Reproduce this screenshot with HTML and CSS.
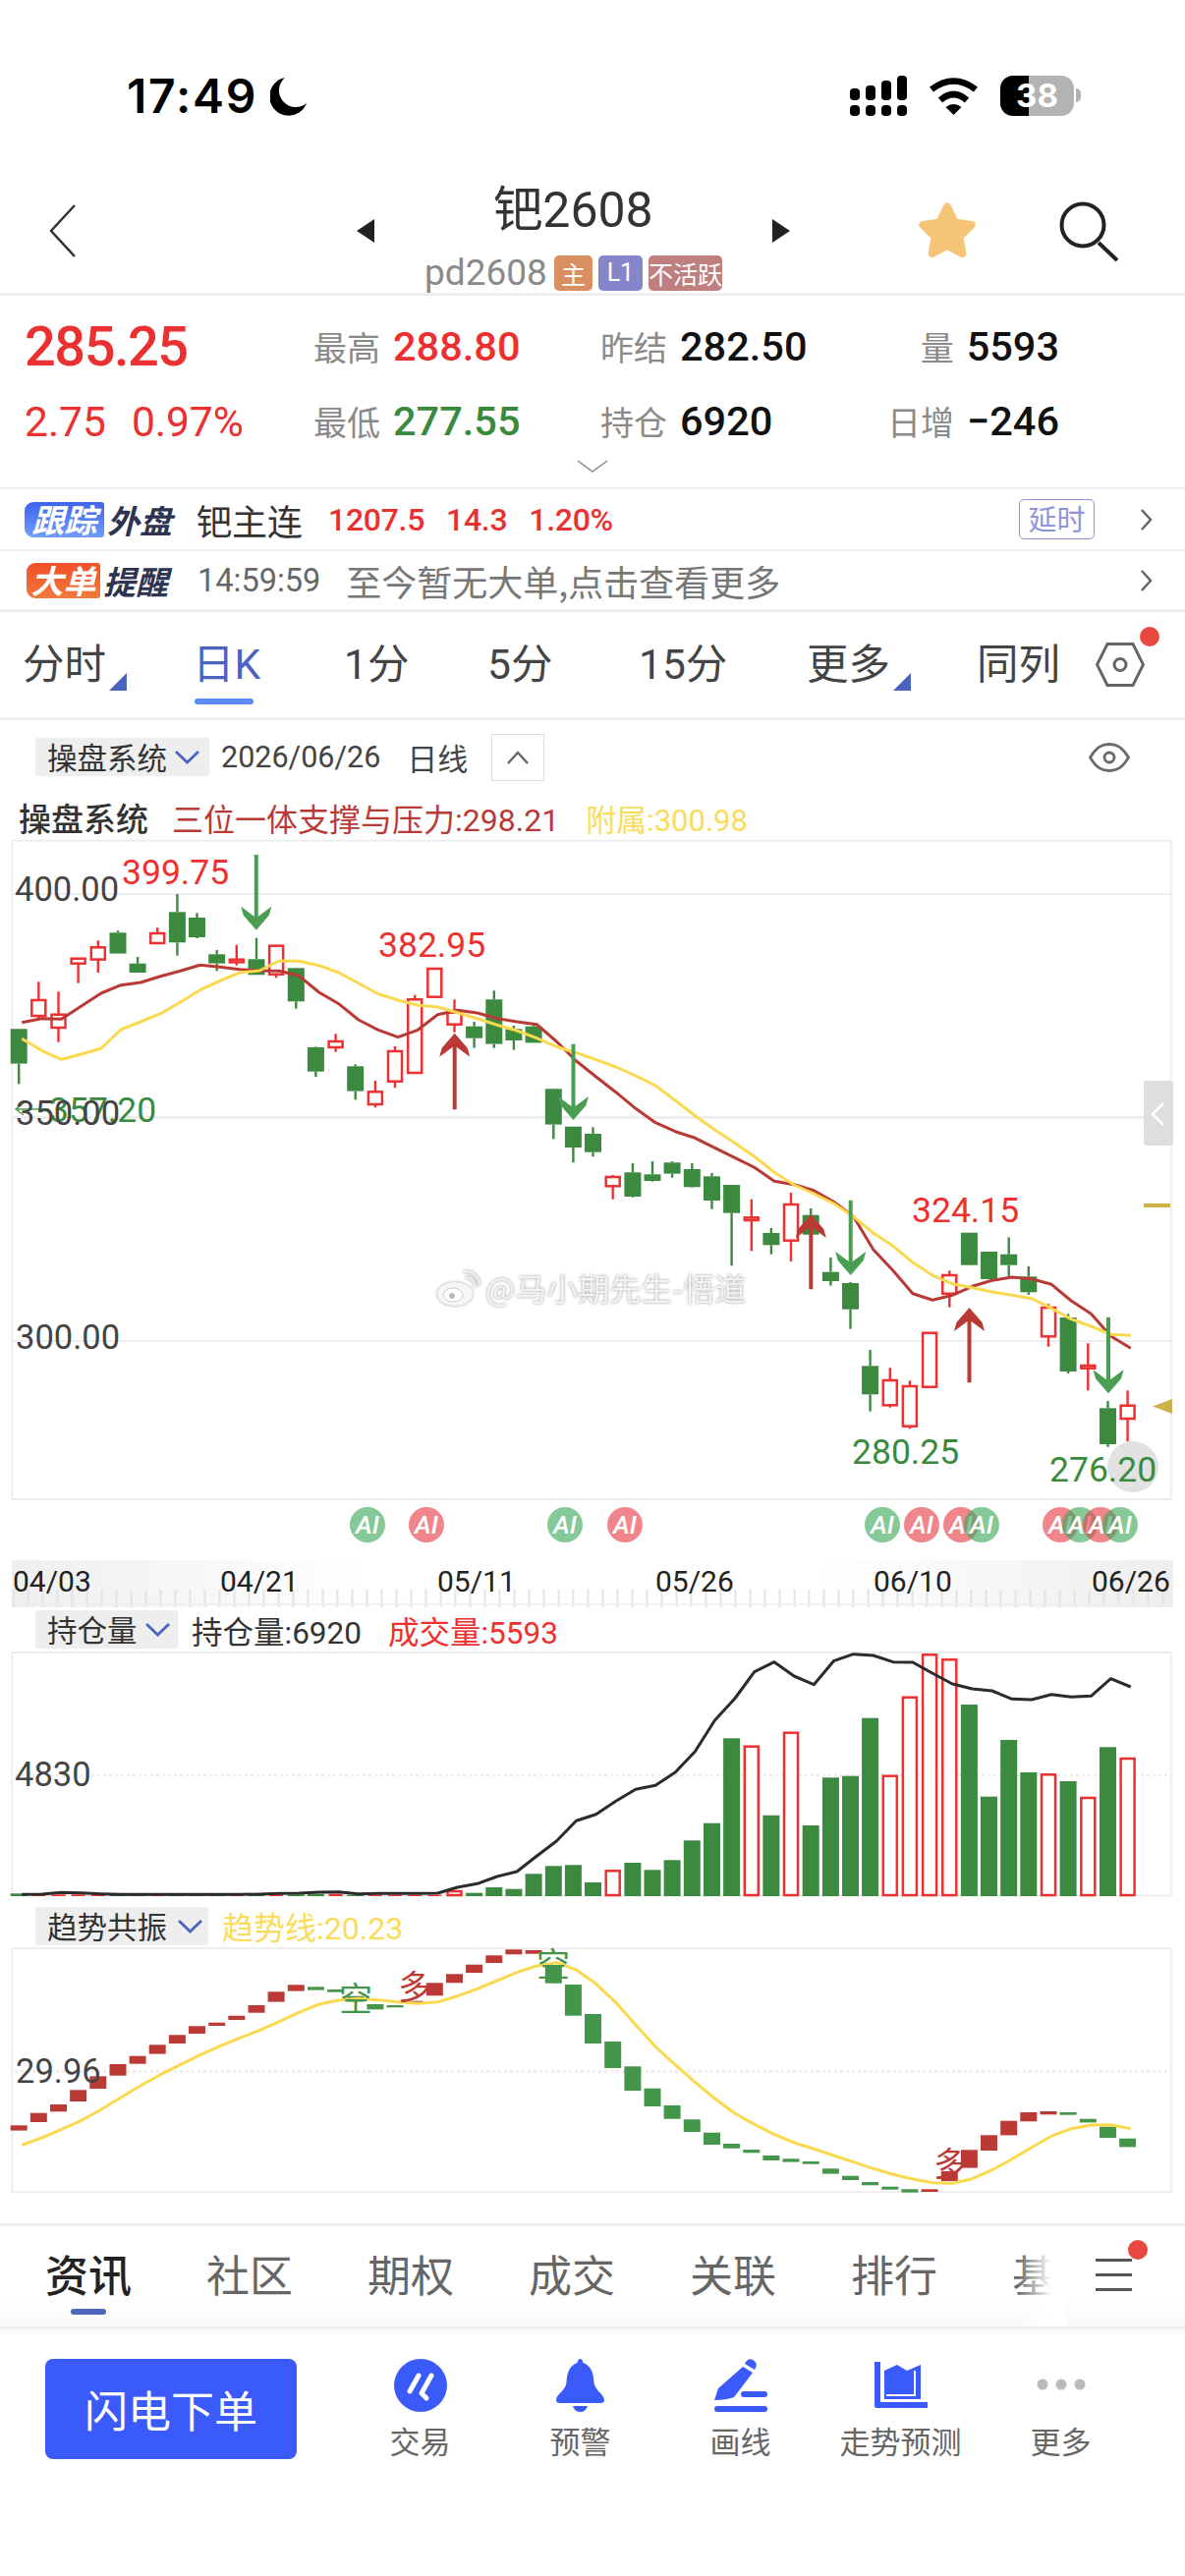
FILE: index.html
```html
<!DOCTYPE html>
<html lang="zh-CN">
<head>
<meta charset="utf-8">
<title>钯2608</title>
<link rel="stylesheet" href="styles.css">
</head>
<body>
<header class="status">
  <span class="time">17:49</span>
  <svg class="moon" width="38" height="40" viewBox="0 0 38 40"><path d="M15 1A19.5 19.5 0 1 0 37 27A17 17 0 0 1 15 1Z"/></svg>
  <div class="status-right">
    <svg class="signal" width="58" height="41" viewBox="0 0 58 41"><rect x="0" y="13" width="10" height="12" rx="4"/><rect x="16" y="10" width="10" height="15" rx="4"/><rect x="32" y="5" width="10" height="20" rx="4"/><rect x="48" y="0" width="10" height="25" rx="4"/><rect x="0" y="30" width="10" height="11" rx="4"/><rect x="16" y="30" width="10" height="11" rx="4"/><rect x="32" y="30" width="10" height="11" rx="4"/><rect x="48" y="30" width="10" height="11" rx="4"/></svg>
    <svg class="wifi" width="51" height="39" viewBox="0 0 51 39"><path class="wifi-arc" d="M3 13Q25.500 -4 48 13"/><path class="wifi-arc" d="M12 24Q25.500 12 39 24"/><path d="M17.500 31Q25.500 25 33.500 31L25.500 39Z"/></svg>
    <div class="battery"><span>38</span></div>
  </div>
</header>

<nav class="nav">
  <div class="nav-back"><svg width="28" height="54" viewBox="0 0 28 54"><path class="ln-dark" d="M26 1L2 27L26 53"/></svg></div>
  <div class="nav-center">
    <i class="tri tri-left"></i>
    <div class="nav-title">
      <h1 class="title">钯2608</h1>
      <div class="sub">
        <span class="code">pd2608</span>
        <span class="tag tag-orange">主</span>
        <span class="tag tag-purple">L1</span>
        <span class="tag tag-rose">不活跃</span>
      </div>
    </div>
    <i class="tri tri-right"></i>
  </div>
  <div class="nav-actions">
    <svg class="star" width="60" height="60" viewBox="0 0 60 60"><path d="M30 5.500L37.600 21.500L54.700 24L42.400 36L45.300 53L30 45L14.700 53L17.600 36L5.300 24L22.400 21.500Z"/></svg>
    <svg class="search" width="62" height="62" viewBox="0 0 62 62"><circle cx="24" cy="24" r="21.500"/><path d="M40 42L59 60"/></svg>
  </div>
</nav>

<section class="quote">
  <div class="quote-grid">
    <div class="cell price red">285.25</div>
    <div class="cell"><span class="lbl">最高</span><b class="val red">288.80</b></div>
    <div class="cell"><span class="lbl">昨结</span><b class="val">282.50</b></div>
    <div class="cell cell-end"><span class="lbl">量</span><b class="val">5593</b></div>
    <div class="cell change red"><span>2.75</span><span>0.97%</span></div>
    <div class="cell"><span class="lbl">最低</span><b class="val green">277.55</b></div>
    <div class="cell"><span class="lbl">持仓</span><b class="val">6920</b></div>
    <div class="cell cell-end"><span class="lbl">日增</span><b class="val">−246</b></div>
  </div>
  <div class="more"><svg width="32" height="13" viewBox="0 0 32 13"><path class="ln-gray" d="M1 1L16 12L31 1"/></svg></div>
</section>

<div class="info info-a">
  <span class="chip chip-blue">跟踪</span><span class="chip-side">外盘</span>
  <span class="ext-name">钯主连</span>
  <span class="ext-nums red"><span>1207.5</span><span>14.3</span><span>1.20%</span></span>
  <span class="delay">延时</span>
  <svg class="go" width="13" height="22" viewBox="0 0 13 22"><path class="ln-mid" d="M2 1L11 11L2 21"/></svg>
</div>
<div class="info info-b">
  <span class="chip chip-orange">大单</span><span class="chip-side">提醒</span>
  <span class="big-time">14:59:59</span>
  <span class="big-text">至今暂无大单,点击查看更多</span>
  <svg class="go" width="13" height="22" viewBox="0 0 13 22"><path class="ln-mid" d="M2 1L11 11L2 21"/></svg>
</div>

<div class="tabs">
  <span class="tab">分时<i class="corner"></i></span>
  <span class="tab tab-on">日K</span>
  <span class="tab">1分</span>
  <span class="tab">5分</span>
  <span class="tab">15分</span>
  <span class="tab">更多<i class="corner"></i></span>
  <span class="tab">同列</span>
  <span class="hex-wrap">
    <svg width="50" height="45" viewBox="0 0 50 45"><path class="ln-hex" d="M12 1.500H38L48.500 22.500L38 43.500H12L1.500 22.500Z"/><circle class="ln-hex" cx="25" cy="22.500" r="6"/></svg>
    <i class="dot dot-hex"></i>
  </span>
</div>

<div class="toolbar">
  <span class="drop drop-a">操盘系统<svg width="27" height="15" viewBox="0 0 27 15"><path class="ln-blue" d="M2 2L13.500 13L25 2"/></svg></span>
  <span class="date">2026/06/26</span>
  <span class="period">日线</span>
  <span class="up-btn"><svg width="24" height="14" viewBox="0 0 24 14"><path class="ln-mid" d="M2 13L12 2L22 13"/></svg></span>
  <svg class="eye" width="42" height="30" viewBox="0 0 42 30"><path class="ln-eye" d="M1.500 15C8 4 14 1.500 21 1.500S34 4 40.500 15C34 26 28 28.500 21 28.500S8 26 1.500 15Z"/><circle class="ln-eye" cx="21" cy="15" r="5"/></svg>
</div>

<div class="legend">
  <span class="legend-name">操盘系统</span>
  <span class="legend-a">三位一体支撑与压力:298.21</span>
  <span class="legend-b">附属:300.98</span>
</div>

<svg class="chart chart-main" width="1206" height="786" viewBox="0 850 1206 786">
  <defs>
    <linearGradient id="axL"><stop offset="0" stop-color="#efefef"/><stop offset="1" stop-color="#ffffff"/></linearGradient>
    <linearGradient id="axR"><stop offset="0" stop-color="#ffffff"/><stop offset="1" stop-color="#eeeeee"/></linearGradient>
  </defs>
  <rect class="frame" x="12.300" y="855.700" width="1179.500" height="670.300"/>
  <path class="grid" d="M12 910H1194M12 1365H1194"/>
  <path class="grid grid-thick" d="M12 1137.500H1194"/>
  <g class="watermark">
    <ellipse cx="463" cy="1317" rx="18" ry="12"/>
    <ellipse class="wm-in" cx="461" cy="1318" rx="10" ry="7"/>
    <circle class="wm-eye" cx="460" cy="1319" r="3"/>
    <path class="wm-wave" d="M474 1300Q482 1300 484 1310M472 1294Q486 1294 488 1308"/>
    <text x="494" y="1324">@马小期先生-悟道</text>
  </g>
  <g id="candles"></g>
  <g id="arrows"></g>
  <circle class="press" cx="1153" cy="1493" r="26"/>
  <text class="t t-gray" x="15" y="917">400.00</text>
  <text class="t t-red" x="124" y="899.500">399.75</text>
  <text class="t t-red" x="385" y="974">382.95</text>
  <path class="thin-green" d="M50 1129H16M24 1123L16 1129L24 1135"/>
  <text class="t t-green" x="50" y="1142">357.20</text>
  <text class="t t-gray" x="16" y="1145">350.00</text>
  <text class="t t-gray" x="16" y="1373">300.00</text>
  <text class="t t-red" x="928" y="1244">324.15</text>
  <text class="t t-green" x="867" y="1490">280.25</text>
  <text class="t t-green" x="1068" y="1508">276.20</text>
  <rect class="handle" x="1164" y="1100" width="30" height="66" rx="3"/>
  <path class="handle-c" d="M1184 1123L1173 1134L1184 1145"/>
  <rect class="gold" x="1164" y="1225" width="27" height="4"/>
  <path class="gold" d="M1173 1431.500L1193 1424V1439Z"/>
  <g class="ai ai-g"><circle cx="374" cy="1552" r="18"/><text x="374" y="1561">AI</text></g>
  <g class="ai ai-r"><circle cx="434" cy="1552" r="18"/><text x="434" y="1561">AI</text></g>
  <g class="ai ai-g"><circle cx="575" cy="1552" r="18"/><text x="575" y="1561">AI</text></g>
  <g class="ai ai-r"><circle cx="636" cy="1552" r="18"/><text x="636" y="1561">AI</text></g>
  <g class="ai ai-g"><circle cx="898" cy="1552" r="18"/><text x="898" y="1561">AI</text></g>
  <g class="ai ai-r"><circle cx="938" cy="1552" r="18"/><text x="938" y="1561">AI</text></g>
  <g class="ai ai-r"><circle cx="978" cy="1552" r="18"/><text x="978" y="1561">AI</text></g>
  <g class="ai ai-g"><circle cx="999" cy="1552" r="18"/><text x="999" y="1561">AI</text></g>
  <g class="ai ai-r"><circle cx="1079" cy="1552" r="18"/><text x="1079" y="1561">AI</text></g>
  <g class="ai ai-g"><circle cx="1099" cy="1552" r="18"/><text x="1099" y="1561">AI</text></g>
  <g class="ai ai-r"><circle cx="1120" cy="1552" r="18"/><text x="1120" y="1561">AI</text></g>
  <g class="ai ai-g"><circle cx="1140" cy="1552" r="18"/><text x="1140" y="1561">AI</text></g>
  <rect class="axis-l" x="12" y="1588" width="363" height="48"/>
  <rect class="axis-r" x="830" y="1588" width="364" height="48"/>
  <g id="ticks"></g>
  <path class="grid" d="M12 1632.700H1194"/>
  <text class="t-date" x="13" y="1620">04/03</text>
  <text class="t-date" x="224" y="1620">04/21</text>
  <text class="t-date" x="445" y="1620">05/11</text>
  <text class="t-date" x="667" y="1620">05/26</text>
  <text class="t-date" x="889" y="1620">06/10</text>
  <text class="t-date" x="1111" y="1620">06/26</text>
</svg>

<div class="pane-head">
  <span class="drop drop-b">持仓量<svg width="27" height="15" viewBox="0 0 27 15"><path class="ln-blue" d="M2 2L13.500 13L25 2"/></svg></span>
  <span class="pane-dark">持仓量:6920</span>
  <span class="pane-red">成交量:5593</span>
</div>
<svg class="chart chart-vol" width="1206" height="256" viewBox="0 1680 1206 256">
  <rect class="frame" x="12.300" y="1682" width="1179.500" height="247.500"/>
  <path class="dots" d="M15 1807H1192"/>
  <g id="volume"></g>
  <text class="t t-gray" x="15" y="1818">4830</text>
</svg>

<div class="pane-head pane-head-b">
  <span class="drop drop-c">趋势共振<svg width="27" height="15" viewBox="0 0 27 15"><path class="ln-blue" d="M2 2L13.500 13L25 2"/></svg></span>
  <span class="pane-yellow">趋势线:20.23</span>
</div>
<svg class="chart chart-trend" width="1206" height="259" viewBox="0 1981 1206 259">
  <rect class="frame" x="12.300" y="1983" width="1179.500" height="248"/>
  <path class="dots" d="M15 2108.500H1192"/>
  <g id="trend"></g>
  <text class="t t-gray" x="16" y="2120">29.96</text>
  <text class="sig sig-g" x="345" y="2047">空</text>
  <text class="sig sig-r" x="405" y="2035">多</text>
  <text class="sig sig-g" x="546" y="2012">空</text>
  <text class="sig sig-r" x="950" y="2215">多</text>
</svg>

<div class="subtabs">
  <div class="subtabs-scroll">
    <span class="subtab subtab-on">资讯</span>
    <span class="subtab">社区</span>
    <span class="subtab">期权</span>
    <span class="subtab">成交</span>
    <span class="subtab">关联</span>
    <span class="subtab">排行</span>
    <span class="subtab">基本</span>
  </div>
  <span class="burger"><i></i><i></i><i></i><i class="dot dot-burger"></i></span>
</div>

<footer class="bar">
  <button class="flash">闪电下单</button>
  <div class="bar-items">
    <div class="bar-item">
      <svg width="54" height="54" viewBox="0 0 54 54"><ellipse class="ic" cx="27" cy="27" rx="27" ry="27"/><path class="ic-w" d="M25 17L16 33M38 17L28 35L33 40"/></svg>
      <span>交易</span>
    </div>
    <div class="bar-item">
      <svg width="50" height="54" viewBox="0 0 50 54"><path class="ic" d="M24.500 0c-1.500 0-2.500 1.500-3 4C13 7 11 15 10.500 24C10 32 0 36 0 42q0 3 4 3H45q4 0 4-3C49 36 39 32 38.500 24C38 15 36 7 27.500 4C27 1.500 26 0 24.500 0Z"/><path class="ic" d="M17 48H32Q30 54 24.500 54Q19 54 17 48Z"/></svg>
      <span>预警</span>
    </div>
    <div class="bar-item">
      <svg width="54" height="54" viewBox="0 0 54 54"><path class="ic" d="M32 3Q35 -1 39 1L41 2.500Q44 5 42 9L41 11L31 5Z"/><path class="ic" d="M29 8L39 14L20 39Q12 42 0 42L4 30Z"/><rect class="ic" x="27" y="33" width="27" height="6" rx="3"/><rect class="ic" x="0" y="48" width="54" height="6" rx="3"/></svg>
      <span>画线</span>
    </div>
    <div class="bar-item">
      <svg width="54" height="54" viewBox="0 0 54 54"><path class="ic" d="M0 3H6V44H54V50H2Q0 50 0 48Z"/><path class="ic" d="M10 12L23 6L33 12L47 6V41H10Z"/><path class="ic-gap" d="M12 37H41V12"/></svg>
      <span>走势预测</span>
    </div>
    <div class="bar-item">
      <svg width="54" height="54" viewBox="0 0 54 54"><circle class="ic-dots" cx="8" cy="26" r="5.500"/><circle class="ic-dots" cx="27" cy="26" r="5.500"/><circle class="ic-dots" cx="46" cy="26" r="5.500"/></svg>
      <span>更多</span>
    </div>
  </div>
</footer>
<script src="chart.js"></script>
</body>
</html>
```

FILE: styles.css
```css
* { box-sizing: border-box; }
html, body { margin: 0; padding: 0; background: #fff; }
body {
  width: 1206px;
  height: 2622px;
  overflow: hidden;
  font-family: Roboto, "Noto Sans CJK SC", sans-serif;
  color: #333;
}
i { display: block; font-style: normal; }
.red { color: #ea3030; }
.green { color: #3a8a3e; }

/* status bar */
.status { display: flex; align-items: flex-start; height: 180px; padding: 77px 113px 0 129px; }
.time { font: 600 48px/50px Inter, sans-serif; color: #000; margin-top: -4px; letter-spacing: 1.800px; }
.moon { margin-left: 13px; margin-top: 1px; fill: #000; }
.status-right { margin-left: auto; display: flex; align-items: flex-start; gap: 22px; }
.signal { fill: #000; }
.wifi { fill: #000; margin-top: 1px; }
.wifi-arc { fill: none; stroke: #000; stroke-width: 6.500px; }
.battery {
  position: relative; width: 75px; height: 41px; border-radius: 13px;
  background: linear-gradient(90deg, #000 39%, #b3b3b3 39%);
  display: flex; align-items: center; justify-content: center;
  color: #fff; font: 700 33px/41px Inter, sans-serif;
}
.battery::after {
  content: ""; position: absolute; left: 77px; top: 13px; width: 5px; height: 14px;
  background: #b3b3b3; border-radius: 0 7px 7px 0;
}

/* navigation */
.nav { display: grid; grid-template-columns: 363px 441px 1fr; height: 121px; border-bottom: 3px solid #eee; }
.nav-back { padding: 28px 0 0 50px; }
.nav-center { display: flex; justify-content: space-between; align-items: flex-start; }
.tri { width: 0; height: 0; margin-top: 43px; border-top: 12px solid transparent; border-bottom: 12px solid transparent; }
.tri-left { border-right: 18px solid #222; }
.tri-right { border-left: 18px solid #222; }
.nav-title { display: flex; flex-direction: column; align-items: center; padding-top: 6px; }
.title { margin: 0; font: 400 50px/56px Roboto, "Noto Sans CJK SC", sans-serif; color: #333; }
.sub { display: flex; align-items: center; gap: 6px; margin-top: 18px; height: 36px; }
.code { font-size: 37px; line-height: 36px; color: #8a8a8a; margin-right: 1px; }
.tag { height: 36px; line-height: 36px; text-align: center; color: #fff; font-size: 25px; border-radius: 5px; font-family: "Noto Sans CJK SC", sans-serif; }
.tag-orange { width: 39px; background: #d98f5f; }
.tag-purple { width: 45px; background: #8585c9; font-family: Roboto, sans-serif; }
.tag-rose { width: 75px; background: #c07f7f; }
.nav-actions { display: flex; align-items: flex-start; padding: 25px 0 0 130px; gap: 84px; }
.star { fill: #f6c476; stroke: #f6c476; stroke-width: 8px; stroke-linejoin: round; }
.search { fill: none; stroke: #222; stroke-width: 4px; }
.ln-dark, .ln-gray, .ln-mid, .ln-blue, .ln-hex, .ln-eye { fill: none; }
.ln-dark { stroke: #333; stroke-width: 2.500px; }
.ln-gray { stroke: #8a8a8a; stroke-width: 1.500px; }
.ln-mid { stroke: #666; stroke-width: 2.500px; }
.ln-blue { stroke: #4a64c0; stroke-width: 2.800px; }
.ln-hex { stroke: #666; stroke-width: 3px; }
.ln-eye { stroke: #6a6a6a; stroke-width: 2.800px; }

/* quote */
.quote { height: 195px; padding-top: 14px; }
.quote-grid { display: grid; grid-template-columns: 293px 292px 269px 198px; grid-template-rows: 76px 76px; padding-left: 26px; }
.cell { display: flex; align-items: center; gap: 13px; }
.cell-end { justify-content: flex-end; }
.price { font-size: 56px; font-weight: 500; letter-spacing: -1.500px; margin-left: -1px; }
.change { font-size: 42.500px; gap: 26px; font-weight: 400; margin-left: -1px; }
.lbl { font: 400 34px/44px "Noto Sans CJK SC", sans-serif; color: #8a8a8a; }
.val { font-size: 41.500px; line-height: 44px; font-weight: 500; color: #111; }
.val.red { color: #ea3030; }
.val.green { color: #3a8a3e; }
.more { display: flex; justify-content: center; margin-top: 1px; }

/* info rows */
.info { display: flex; align-items: center; border-top: 2px solid #eee; padding-right: 33px; }
.info-a { height: 63px; padding-left: 25px; }
.info-b { height: 61px; padding-left: 27px; }
.chip {
  height: 36px; line-height: 35px; text-align: center; color: #fff;
  font: italic 700 33px/35px "Noto Sans CJK SC", sans-serif;
  border-radius: 9px 3px 3px 9px;
}
.chip-blue { width: 81px; background: linear-gradient(#3f63ea, #6f9dff); }
.chip-orange { width: 75px; background: linear-gradient(#f04f27, #f07a3d); }
.chip-side { font: italic 700 33px/36px "Noto Sans CJK SC", sans-serif; color: #2d3350; margin-left: 3px; white-space: nowrap; }
.ext-name { font: 400 36px/40px "Noto Sans CJK SC", sans-serif; margin-left: 25px; color: #333; }
.ext-nums { display: flex; gap: 22px; margin-left: 26px; font-size: 32px; font-weight: 500; letter-spacing: -.3px; }
.delay {
  margin-left: auto; width: 77px; height: 41px; line-height: 36px; text-align: center;
  border: 1.500px solid #8f93dc; border-radius: 5px; color: #8f93dc;
  font: 400 29px/37px "Noto Sans CJK SC", sans-serif;
}
.go { margin-left: 46px; flex: none; }
.info-b .go { margin-left: auto; }
.big-time { margin-left: 30px; font-size: 32.500px; color: #666; }
.big-text { margin-left: 26px; font: 400 36px/40px "Noto Sans CJK SC", sans-serif; color: #777; }

/* tabs */
.tabs {
  display: grid; grid-template-columns: 175px 152px 146px 154px 171px 173px 121px 1fr;
  align-items: center; height: 113px; padding-left: 23px;
  border-top: 3px solid #eee; border-bottom: 3px solid #eee;
}
.tab { position: relative; justify-self: start; font-size: 42.500px; line-height: 44px; color: #444; }
.tab-on { color: #4a64c0; margin-left: -2px; }
.tab-on::after { content: ""; position: absolute; left: 2px; bottom: -18px; width: 60px; height: 6px; border-radius: 3px; background: #5b8cf5; }
.corner { position: absolute; left: 88px; bottom: -4px; width: 0; height: 0; border-left: 18px solid transparent; border-bottom: 18px solid #4a64c0; }
.hex-wrap { position: relative; display: block; width: 50px; height: 45px; }
.hex-wrap svg { display: block; }
.dot { position: absolute; border-radius: 50%; background: #e8483f; width: 20px; height: 20px; }
.dot-hex { left: 45px; top: -16px; }

/* chart header */
.toolbar { display: flex; align-items: center; height: 67px; padding: 8px 0 0 36px; }
.drop { display: flex; align-items: center; height: 39px; background: #eee; border-radius: 3px; padding-left: 12px; color: #333; font: 400 30.500px/39px "Noto Sans CJK SC", sans-serif; gap: 7px; }
.drop-a { width: 177px; }
.date { margin-left: 12px; font-size: 30.500px; color: #444; }
.period { margin-left: 27px; font: 400 31px/40px "Noto Sans CJK SC", sans-serif; color: #444; }
.up-btn { display: flex; align-items: center; justify-content: center; width: 54px; height: 48px; margin-left: 24px; border: 1.500px solid #ddd; }
.eye { margin-left: auto; margin-right: 56px; }
.legend { display: flex; align-items: center; height: 50px; padding: 14px 0 0 19px; }
.legend-name { font: 500 33px/36px "Noto Sans CJK SC", sans-serif; color: #333; }
.legend-a { margin-left: 24px; font-size: 32px; color: #b93a35; }
.legend-b { margin-left: 27px; font-size: 31px; color: #f9dc5c; }

/* charts */
.chart { display: block; overflow: visible; }
.frame { fill: none; stroke: #eee; stroke-width: 2px; }
.grid { fill: none; stroke: #eee; stroke-width: 1.800px; }
.grid-thick { stroke-width: 3px; }
.dots { fill: none; stroke: #eee; stroke-width: 3px; stroke-dasharray: 3 3; }
.t { font-family: Roboto, sans-serif; font-size: 35.500px; }
.t-gray { fill: #444; font-size: 34.500px; }
.t-red { fill: #ee3030; }
.t-green { fill: #3a8a3e; }
.t-date { font-family: Roboto, sans-serif; font-size: 30px; fill: #222; }
.thin-green { fill: none; stroke: #4a9e52; stroke-width: 1.500px; }
.press { fill: #ddd; opacity: .85; }
.handle { fill: #dedede; }
.handle-c { fill: none; stroke: #fff; stroke-width: 2.500px; }
.gold { fill: #cdb24b; }
.axis-l { fill: url(#axL); }
.axis-r { fill: url(#axR); }
.tick { stroke: #e3e3e3; stroke-width: 2px; }
.ai circle { opacity: .62; }
.ai-g circle { fill: #3aa85a; }
.ai-r circle { fill: #e63c46; }
.ai text { fill: #fff; font-family: Roboto, sans-serif; font-size: 26px; font-weight: 500; font-style: italic; text-anchor: middle; }
.watermark { filter: drop-shadow(0 0 1.500px #999); }
.watermark text { fill: #f2f2f2; font: 400 32px "Noto Sans CJK SC", sans-serif; }
.watermark ellipse { fill: #f6f6f6; }
.watermark .wm-in { fill: #fff; stroke: #ccc; }
.wm-eye { fill: #bbb; }
.wm-wave { fill: none; stroke: #eee; stroke-width: 2.500px; }
.c-g { fill: #3c8a40; }
.c-r { fill: #fff; stroke: #ee3030; stroke-width: 2.500px; }
.wick-g { stroke: #3c8a40; stroke-width: 2.400px; }
.wick-r { stroke: #ee3030; stroke-width: 2.400px; }
.ma-red { fill: none; stroke: #b93a35; stroke-width: 3px; stroke-linejoin: round; }
.ma-yellow { fill: none; stroke: #fbd94f; stroke-width: 3px; stroke-linejoin: round; }
.ma-black { fill: none; stroke: #2b2b2b; stroke-width: 3px; stroke-linejoin: round; }
.ar-g { fill: #4a9e52; }
.ar-r { fill: #b93a35; }
.tr-g { fill: #43964a; }
.tr-r { fill: #bb3a35; }
.sig { font: 400 34px "Noto Sans CJK SC", sans-serif; }
.sig-g { fill: #43964a; }
.sig-r { fill: #bb3a35; }

.pane-head { display: flex; align-items: center; height: 44px; padding: 3px 0 2px 36px; gap: 14px; }
.pane-head-b { height: 45px; padding: 5px 0 2px 36px; }
.drop-b { width: 145px; }
.drop-c { width: 176px; gap: 10px; }
.pane-dark { font-size: 31.500px; color: #333; }
.pane-red { font-size: 31.500px; color: #ee3030; margin-left: 13px; }
.pane-yellow { font-size: 32px; color: #f9dc5c; }

/* lower tabs */
.subtabs {
  display: flex; align-items: center; height: 108px; margin-top: 23px; padding-left: 46px;
  border-top: 3px solid #eee; border-bottom: 3px solid #eee;
  background: linear-gradient(#fff 70%, #f9f9f9);
}
.subtabs-scroll { position: relative; display: flex; align-items: center; gap: 76px; width: 1039px; height: 102px; flex: none; overflow: hidden; }
.subtabs-scroll::after { content: ""; position: absolute; right: 0; top: 0; bottom: 0; width: 50px; background: linear-gradient(90deg, rgba(255,255,255,0), #fff 70%); }
.subtab { flex: none; position: relative; margin-top: -6px; font: 400 44px/64px "Noto Sans CJK SC", sans-serif; color: #666; }
.subtab-on { color: #222; font-weight: 500; }
.subtab-on::after { content: ""; position: absolute; left: 26px; bottom: -10px; width: 36px; height: 6px; border-radius: 3px; background: #4f68bd; }
.burger { position: relative; display: flex; flex-direction: column; gap: 12.500px; width: 37px; margin-left: 30px; margin-top: -3px; }
.burger i:not(.dot) { height: 2.500px; background: #555; }
.dot-burger { left: 33px; top: -19px; }

/* bottom bar */
.bar { display: flex; align-items: flex-start; padding: 30px 0 0 46px; background: linear-gradient(#f8f8f8, #fff 6px); }
.flash { width: 256px; height: 102px; border: 0; border-radius: 8px; background: #3a5bfa; color: #fff; font: 400 44px/1 "Noto Sans CJK SC", sans-serif; }
.bar-items { display: grid; grid-template-columns: repeat(5, 163px); margin-left: 44px; }
.bar-item { display: flex; flex-direction: column; align-items: center; gap: 11px; }
.bar-item svg { display: block; }
.bar-item span { font: 400 31px/36px "Noto Sans CJK SC", sans-serif; color: #666; }
.ic { fill: #3a5bfa; }
.ic-w { fill: none; stroke: #fff; stroke-width: 5px; stroke-linecap: round; stroke-linejoin: round; }
.ic-gap { fill: none; stroke: #fff; stroke-width: 2px; }
.ic-dots { fill: #bbb; }
```

FILE: chart.js
```js
(function () {
  var cx = function (i) { return 19.2 + 20.15 * i; };
  var lx = function (i) { return 22.3 + 20.15 * i; };
  var Y = function (z) { return 840 + z / 3; };
  var f = function (n) { return n.toFixed(1); };

  var colors = 'grrrrggrgg' + 'grgrggrgrr' + 'rrrggggggg' + 'rggggggrgr' + 'ggggrrrrgg' + 'ggrgrgr';

  var candles = [
    [622,622,728,790],[478,534,582,590],[508,578,618,662],[405,407,422,482],[352,373,410,450],
    [322,328,392,392],[402,422,450,450],[313,330,360,360],[210,265,358,398],[268,282,342,345],
    [381,394,422,445],[365,410,418,428],[344,409,457,457],[365,368,455,466],[436,436,538,560],
    [676,678,752,768],[637,660,678,692],[730,736,812,838],[780,814,852,862],[675,690,782,802],
    [518,532,756,756],[438,438,524,524],[532,572,608,632],[600,614,650,680],[505,532,668,680],
    [612,622,657,686],[607,614,664,664],[805,805,914,958],[920,920,984,1030],[922,942,998,1012],
    [1068,1074,1102,1142],[1032,1060,1134,1136],[1026,1066,1086,1088],[1026,1030,1064,1076],[1032,1050,1105,1106],
    [1062,1072,1146,1172],[1098,1098,1184,1345],[1142,1198,1206,1300],[1230,1245,1282,1310],[1122,1158,1268,1332],
    [1170,1190,1250,1255],[1320,1364,1392,1406],[1395,1398,1478,1538],[1602,1651,1738,1790],[1657,1695,1771,1778],
    [1696,1713,1835,1843],[1550,1550,1715,1717],[1360,1374,1430,1472],[1244,1244,1343,1343],[1302,1302,1386,1386],
    [1258,1310,1343,1378],[1347,1378,1426,1434],[1462,1473,1561,1592],[1492,1503,1668,1674],[1582,1650,1658,1726],
    [1758,1780,1890,1898],[1726,1772,1812,1882]
  ];

  var maRed = [602,590,592,552,513,488,480,461,445,427,433,440,444,445,460,510,545,594,625,647,625,578,565,573,590,600,608,660,720,768,
    815,865,908,935,955,985,1015,1045,1087,1097,1115,1150,1195,1295,1360,1430,1450,1435,1408,1390,1380,1385,1402,1452,1492,1560,1597];
  var maYellow = [652,688,715,699,681,624,600,575,540,503,475,450,444,414,415,428,450,482,515,534,550,555,572,590,610,627,650,676,695,716,
    738,765,795,840,887,930,970,1012,1060,1098,1125,1155,1195,1245,1285,1335,1375,1400,1412,1425,1435,1445,1475,1508,1530,1555,1558];

  function line(vals, toY, cls) {
    var d = vals.map(function (v, i) { return (i ? 'L' : 'M') + f(lx(i)) + ' ' + f(toY(v)); }).join('');
    return '<path class="' + cls + '" d="' + d + '"/>';
  }

  var h = '';
  candles.forEach(function (c, i) {
    var x = cx(i), red = colors[i] === 'r';
    var wick = red ? 'wick-r' : 'wick-g';
    if (c[0] < c[1]) h += '<line class="' + wick + '" x1="' + f(x) + '" x2="' + f(x) + '" y1="' + f(Y(c[0])) + '" y2="' + f(Y(c[1])) + '"/>';
    if (c[3] > c[2]) h += '<line class="' + wick + '" x1="' + f(x) + '" x2="' + f(x) + '" y1="' + f(Y(c[2])) + '" y2="' + f(Y(c[3])) + '"/>';
    if (red) {
      h += '<rect class="c-r" x="' + f(x - 7) + '" y="' + f(Y(c[1])) + '" width="14" height="' + f(Math.max((c[2] - c[1]) / 3, .5)) + '"/>';
    } else {
      h += '<rect class="c-g" x="' + f(x - 8.5) + '" y="' + f(Y(c[1])) + '" width="17" height="' + f((c[2] - c[1]) / 3) + '"/>';
    }
  });
  h += line(maRed, Y, 'ma-red') + line(maYellow, Y, 'ma-yellow');
  document.getElementById('candles').innerHTML = h;

  /* s = +1 for a downward arrow, -1 for an upward one; both are drawn from the tail to the tip */
  function arrow(x, tail, tip, s, cls) {
    var p = [[x - 2, tail], [x + 2, tail], [x + 2, tip - s * 14], [x + 15.5, tip - s * 24],
      [x + 13, tip - s * 15], [x, tip], [x - 13, tip - s * 15], [x - 15.5, tip - s * 24], [x - 2, tip - s * 14]];
    return '<path class="' + cls + '" d="M' + p.map(function (q) { return f(q[0]) + ' ' + f(q[1]); }).join('L') + 'Z"/>';
  }
  document.getElementById('arrows').innerHTML =
    arrow(260.8, 870, 946.7, 1, 'ar-g') + arrow(583.5, 1062.7, 1140, 1, 'ar-g') +
    arrow(865.7, 1221.7, 1298, 1, 'ar-g') + arrow(1128, 1340.7, 1418.3, 1, 'ar-g') +
    arrow(462.7, 1129.3, 1051.7, -1, 'ar-r') + arrow(825.3, 1312.3, 1236, -1, 'ar-r') + arrow(986.5, 1407.3, 1331, -1, 'ar-r');

  var t = '';
  for (var tx = 13.5; tx < 1194; tx += 15) {
    t += '<line class="tick" x1="' + tx + '" x2="' + tx + '" y1="1618" y2="1636"/>';
  }
  document.getElementById('ticks').innerHTML = t;

  /* volume pane: tops measured from y 1620 at 3x, base 930 */
  var vol = [922,926,925,925,926,926,926,926,927,927,927,927,925,925,925,923,923,926,926,926,926,926,
    912,920,903,908,862,838,835,888,850,828,850,820,760,707,448,470,683,428,714,568,563,386,560,320,190,205,345,626,453,552,556,579,627,475,507];
  var vy = function (z) { return 1620 + z / 3; };
  var black = [925,924,919,920,923,925,925,925,925,925,925,925,924,922,921,918,917,923,922,922,922,921,903,892,870,855,808,762,700,680,
    640,604,592,552,488,393,327,245,215,258,284,212,191,195,215,216,250,282,297,303,328,330,314,322,319,266,291];
  var v = '';
  vol.forEach(function (z, i) {
    var x = cx(i), top = vy(z), bottom = vy(930);
    if (colors[i] === 'r') {
      if (bottom - top < 6) v += '<rect x="' + f(x - 7) + '" y="' + f(top) + '" width="14" height="' + f(bottom - top) + '" fill="#ee3030"/>';
      else v += '<rect class="c-r" x="' + f(x - 7) + '" y="' + f(top + 1) + '" width="14" height="' + f(bottom - top - 2) + '"/>';
    } else {
      v += '<rect class="c-g" x="' + f(x - 8.5) + '" y="' + f(top) + '" width="17" height="' + f(bottom - top) + '"/>';
    }
  });
  v += line(black, vy, 'ma-black');
  document.getElementById('volume').innerHTML = v;

  /* trend pane */
  var tz = function (z) { return 1930 + z / 3; };
  var boxes = [[700,716],[662,690],[636,658],[592,627],[550,588],[513,548],[488,512],[454,482],[424,450],[397,420],
    [386,396],[365,378],[333,356],[292,323],[271,290],[277,287],[285,293],[305,322],[330,346],[333,340],
    [320,330],[265,304],[238,265],[209,234],[181,204],[163,178],[165,176],[210,266],[270,365],[360,450],
    [444,525],[520,594],[587,642],[639,680],[682,720],[722,759],[756,770],[774,784],[792,807],[802,812],
    [810,818],[832,848],[854,867],[873,883],[887,896],[895,905],[895,903],[840,870],[775,830],[730,777],
    [686,730],[660,688],[657,667],[660,668],[680,691],[704,738],[740,766]];
  var trendYellow = [760,738,712,685,652,615,578,545,515,485,458,433,410,383,355,330,318,313,317,323,328,323,305,283,258,233,213,203,225,268,
    325,393,460,515,568,618,663,697,727,753,772,792,812,832,850,864,875,877,863,836,803,767,733,710,699,698,710];
  var s = '';
  boxes.forEach(function (b, i) {
    var red = i < 15 || (i >= 20 && i <= 26) || (i >= 46 && i <= 52);
    s += '<rect class="' + (red ? 'tr-r' : 'tr-g') + '" x="' + f(cx(i) - 8.5) + '" y="' + f(tz(b[0])) + '" width="17" height="' + f((b[1] - b[0]) / 3) + '"/>';
  });
  s += line(trendYellow, tz, 'ma-yellow');
  document.getElementById('trend').innerHTML = s;
})();
```
